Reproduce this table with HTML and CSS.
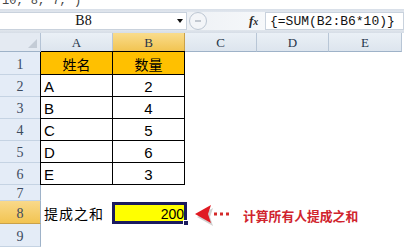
FILE: index.html
```html
<!DOCTYPE html>
<html>
<head>
<meta charset="utf-8">
<link rel="stylesheet" href="styles.css">
</head>
<body>
<div class="page">
  <div class="topclip"><span class="toptext">10, 8, 7, )</span></div>
  <div class="fbar">
    <div class="namebox"><span class="nb-text">B8</span><span class="nb-arrow"></span></div>
    <div class="mid">
      <span class="circ"><span class="dash"></span></span>
      <span class="fx">f<span class="fx-x">x</span></span>
    </div>
    <div class="formula">{=SUM(B2:B6*10)}</div>
  </div>
  <div class="sheet">
    <div class="corner"><span class="tri"></span></div>
    <div class="ch">A</div>
    <div class="ch sel">B</div>
    <div class="ch">C</div>
    <div class="ch">D</div>
    <div class="ch">E</div>

    <div class="rh">1</div>
    <div class="c t l top head cjk">姓名</div>
    <div class="c t top head cjk">数量</div>
    <div class="c"></div><div class="c"></div><div class="c"></div>

    <div class="rh">2</div>
    <div class="c t l txt">A</div><div class="c t num">2</div>
    <div class="c"></div><div class="c"></div><div class="c"></div>

    <div class="rh">3</div>
    <div class="c t l txt">B</div><div class="c t num">4</div>
    <div class="c"></div><div class="c"></div><div class="c"></div>

    <div class="rh">4</div>
    <div class="c t l txt">C</div><div class="c t num">5</div>
    <div class="c"></div><div class="c"></div><div class="c"></div>

    <div class="rh">5</div>
    <div class="c t l txt">D</div><div class="c t num">6</div>
    <div class="c"></div><div class="c"></div><div class="c"></div>

    <div class="rh">6</div>
    <div class="c t l txt">E</div><div class="c t num">3</div>
    <div class="c"></div><div class="c"></div><div class="c"></div>

    <div class="rh">7</div>
    <div class="c"></div><div class="c"></div>
    <div class="c"></div><div class="c"></div><div class="c"></div>

    <div class="rh sel">8</div>
    <div class="c cjk label">提成之和</div>
    <div class="c active"><span class="val">200</span><span class="handle"></span></div>
    <div class="c"></div><div class="c"></div><div class="c"></div>

    <div class="rh">9</div>
    <div class="c"></div><div class="c"></div>
    <div class="c"></div><div class="c"></div><div class="c"></div>
  </div>

  <div class="note">
    <svg class="arrow" width="48" height="24" viewBox="0 0 48 24">
      <polygon points="5,14 21,5 18,14 21,23" fill="#9a9a9a" opacity="0.45"/>
      <polygon points="3,11 19,2 16,11 19,20" fill="#e01a22"/>
      <rect x="22" y="9.5" width="3" height="3" fill="#d42a2a"/>
      <rect x="28" y="9.5" width="3" height="3" fill="#d42a2a"/>
      <rect x="34" y="9.5" width="3" height="3" fill="#d42a2a"/>
    </svg>
    <span class="note-text">计算所有人提成之和</span>
  </div>
</div>
</body>
</html>
```

FILE: styles.css
```css
* { box-sizing: border-box; }
html, body { margin: 0; padding: 0; background: #fff; }
.page {
  position: relative;
  width: 414px;
  height: 247px;
  overflow: hidden;
  background: #fff;
}
.topclip {
  height: 9px;
  overflow: hidden;
  padding-left: 2px;
}
.toptext {
  display: block;
  margin-top: -6px;
  font-family: "Liberation Mono", monospace;
  font-size: 12px;
  line-height: 14px;
  color: #444;
}
.fbar {
  height: 24px;
  width: 404px;
  display: flex;
  align-items: stretch;
  padding: 3px 0;
  background: linear-gradient(#d8dfe8, #e6ebf1 20%, #e6ebf1 80%, #d6dde6);
}
.namebox {
  width: 187px;
  background: #fff;
  border: 1px solid #c9d2dd;
  border-left: none;
  display: flex;
  align-items: center;
  position: relative;
}
.nb-text {
  flex: 1;
  text-align: center;
  font-family: "Liberation Serif", serif;
  font-size: 14px;
  color: #111;
  padding-right: 10px;
}
.nb-arrow {
  width: 0; height: 0;
  margin-right: 3px;
  border-left: 3.5px solid transparent;
  border-right: 3.5px solid transparent;
  border-top: 4px solid #111;
}
.mid {
  width: 78px;
  display: flex;
  align-items: center;
  background: linear-gradient(90deg, #eef1f5, #f6f8fa);
  padding-left: 2px;
}
.circ {
  width: 18px; height: 18px;
  border-radius: 50%;
  border: 1px solid #bcc6d2;
  background: #f3f5f8;
  display: flex;
  align-items: center;
  justify-content: center;
}
.dash { width: 6px; height: 2px; background: #c2c8d0; }
.fx {
  margin-left: 42px;
  font-family: "Liberation Serif", serif;
  font-style: italic;
  font-weight: bold;
  font-size: 13px;
  color: #2a2a2a;
}
.fx-x { font-size: 10px; }
.formula {
  flex: 1;
  background: #fff;
  border: 1px solid #c9d2dd;
  display: flex;
  align-items: center;
  padding-left: 4px;
  font-family: "Liberation Mono", monospace;
  font-size: 13px;
  color: #111;
}
.sheet {
  display: grid;
  grid-template-columns: 41px 72px 72px 72px 72px 73px;
  grid-template-rows: 19px 23px 22px 22px 22px 22px 22px 16px 23px 23px;
  width: 402px;
}
.corner {
  background: #e4eaf2;
  border-right: 1px solid #b4c3d5;
  border-bottom: 1px solid #9eb2c8;
  position: relative;
}
.tri {
  position: absolute;
  right: 3px; bottom: 3px;
  width: 0; height: 0;
  border-left: 9px solid transparent;
  border-bottom: 9px solid #c4ccd6;
}
.ch {
  background: linear-gradient(#eaf0f6, #dde5ee);
  border-right: 1px solid #b8c6d6;
  border-bottom: 1px solid #9eb2c8;
  display: flex;
  align-items: center;
  justify-content: center;
  font-family: "Liberation Serif", serif;
  font-size: 13px;
  color: #26354a;
  padding-top: 1px;
}
.ch.sel {
  background: linear-gradient(#f9dc8c, #f2c451);
  border-right-color: #c9a14a;
  border-bottom-color: #c29a3c;
}
.rh {
  background: #e4ecf7;
  border-right: 1px solid #9eb2c8;
  border-bottom: 1px solid #c5d3e3;
  display: flex;
  align-items: center;
  justify-content: center;
  font-family: "Liberation Serif", serif;
  font-size: 14px;
  color: #3c4a5e;
  padding-top: 3px;
}
.rh.sel {
  background: linear-gradient(#f9d98a, #f2c452);
  border-bottom-color: #c9a14a;
}
.c {
  background: #fff;
  display: flex;
  align-items: center;
}
.c.t {
  border-right: 1px solid #000;
  border-bottom: 1px solid #000;
}
.c.l { border-left: 1px solid #000; margin-left: -1px; }
.c.top { border-top: 1px solid #000; margin-top: -1px; }
.c.head {
  background: #ffc000;
  justify-content: center;
}
.cjk {
  font-family: "Noto Sans CJK SC", sans-serif;
  font-size: 14px;
  color: #000;
  padding-top: 1px;
}
.txt {
  font-family: "Liberation Sans", sans-serif;
  font-size: 15px;
  color: #000;
  padding-left: 3px;
  padding-top: 2px;
}
.num {
  font-family: "Liberation Sans", sans-serif;
  font-size: 15px;
  color: #000;
  justify-content: center;
  padding-top: 2px;
}
.label {
  padding-left: 3px;
  letter-spacing: 1px;
}
.active {
  position: relative;
  margin: 1px -2px 0 -1px;
  background: #ffff00;
  border: 3px solid #1b1b5e;
  justify-content: flex-end;
  padding-right: 0;
  font-family: "Liberation Sans", sans-serif;
  font-size: 14px;
  color: #000;
  padding-top: 1px;
}
.handle {
  position: absolute;
  right: -5px; bottom: -5px;
  width: 6px; height: 6px;
  background: #1b1b5e;
  border: 1px solid #fff;
}
.note {
  position: absolute;
  left: 192px;
  top: 203px;
  display: flex;
  align-items: center;
}
.note-text {
  margin-left: 3px;
  font-family: "Noto Sans CJK SC", sans-serif;
  font-weight: bold;
  font-size: 12.8px;
  color: #d0232d;
}
```
